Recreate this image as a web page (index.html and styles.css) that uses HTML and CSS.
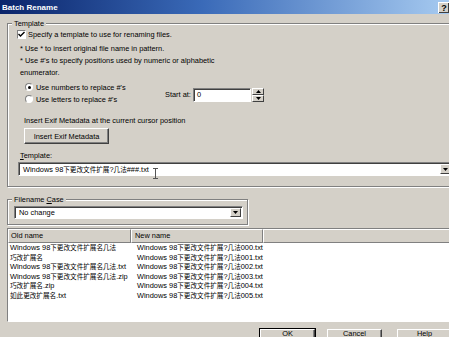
FILE: index.html
```html
<!DOCTYPE html>
<html lang="en">
<head>
  <meta charset="UTF-8" />
  <title>Batch Rename</title>
  <link rel="stylesheet" href="styles.css">
</head>
<body>
  <div class="window">
    <div class="titlebar">
      <span class="title">Batch Rename</span>
      <span class="help-btn">?</span>
    </div>

    <div class="dialog">
      <div class="group group-template">
        <span class="group-label">Template</span>

        <label class="check-row">
          <span class="checkbox">
            <svg width="7" height="7" viewBox="0 0 7 7"><path d="M0.5 3 L2.5 5 L6.5 1" fill="none" stroke="#000" stroke-width="1.4"/></svg>
          </span>
          Specify a template to use for renaming files.
        </label>

        <p class="notes">* Use * to insert original file name in pattern.<br>* Use #'s to specify positions used by numeric or alphabetic<br>enumerator.</p>

        <div class="numbering">
          <div class="radios">
            <label class="radio-row"><span class="radio on"></span>Use numbers to replace #'s</label>
            <label class="radio-row"><span class="radio"></span>Use letters to replace #'s</label>
          </div>
          <span class="start-label">Start at:</span>
          <div class="spin-box">
            <span class="spin-field">0</span>
            <span class="spin-btns">
              <span class="spin-btn"><svg width="5" height="3" viewBox="0 0 5 3"><path d="M0 3 L2.5 0 L5 3 Z" fill="#000"/></svg></span>
              <span class="spin-btn"><svg width="5" height="3" viewBox="0 0 5 3"><path d="M0 0 L2.5 3 L5 0 Z" fill="#000"/></svg></span>
            </span>
          </div>
        </div>

        <div class="exif-hint">Insert Exif Metadata at the current cursor position</div>
        <button class="btn btn-exif">Insert Exif Metadata</button>

        <div class="field-label"><u>T</u>emplate:</div>
        <div class="combo combo-template">
          <span class="combo-text">Windows 98<span class="cjk">下更改文件扩展</span>?<span class="cjk">几法</span>###.txt</span>
          <svg class="ibeam" width="5" height="11" viewBox="0 0 5 11"><path d="M0 0.5 H5 M2.5 0.5 V10.5 M0 10.5 H5" stroke="#555" stroke-width="1" fill="none"/></svg>
          <span class="combo-btn"><svg width="5" height="3" viewBox="0 0 5 3"><path d="M0 0 L2.5 3 L5 0 Z" fill="#000"/></svg></span>
        </div>
      </div>

      <div class="group group-case">
        <span class="group-label">Filename <u>C</u>ase</span>
        <div class="combo combo-case">
          <span class="combo-text">No change</span>
          <span class="combo-btn"><svg width="5" height="3" viewBox="0 0 5 3"><path d="M0 0 L2.5 3 L5 0 Z" fill="#000"/></svg></span>
        </div>
      </div>

      <div class="list">
        <div class="list-head">
          <span class="col col-old">Old name</span>
          <span class="col col-new">New name</span>
          <span class="col col-rest"></span>
        </div>
        <div class="list-row"><span class="cell col-old">Windows 98<span class="cjk">下更改文件扩展名几法</span></span><span class="cell col-new">Windows 98<span class="cjk">下更改文件扩展</span>?<span class="cjk">几法</span>000.txt</span></div>
        <div class="list-row"><span class="cell col-old"><span class="cjk">巧改扩展名</span></span><span class="cell col-new">Windows 98<span class="cjk">下更改文件扩展</span>?<span class="cjk">几法</span>001.txt</span></div>
        <div class="list-row"><span class="cell col-old">Windows 98<span class="cjk">下更改文件扩展名几法</span>.txt</span><span class="cell col-new">Windows 98<span class="cjk">下更改文件扩展</span>?<span class="cjk">几法</span>002.txt</span></div>
        <div class="list-row"><span class="cell col-old">Windows 98<span class="cjk">下更改文件扩展名几法</span>.zip</span><span class="cell col-new">Windows 98<span class="cjk">下更改文件扩展</span>?<span class="cjk">几法</span>003.txt</span></div>
        <div class="list-row"><span class="cell col-old"><span class="cjk">巧改扩展名</span>.zip</span><span class="cell col-new">Windows 98<span class="cjk">下更改文件扩展</span>?<span class="cjk">几法</span>004.txt</span></div>
        <div class="list-row"><span class="cell col-old"><span class="cjk">如此更改扩展名</span>.txt</span><span class="cell col-new">Windows 98<span class="cjk">下更改文件扩展</span>?<span class="cjk">几法</span>005.txt</span></div>
      </div>

      <div class="buttons">
        <button class="btn btn-default">OK</button>
        <button class="btn btn-cancel">Cancel</button>
        <button class="btn btn-help">Help</button>
      </div>
    </div>
  </div>
</body>
</html>
```

FILE: styles.css
```css
body {
  margin: 0;
  background-color: #d4d0c8;
  font-family: 'Liberation Sans', 'Noto Sans CJK SC', sans-serif;
  font-size: 7.4px;
  color: #000;
  overflow: hidden;
}

.window {
  width: 449px;
  height: 337px;
  overflow: hidden;
}

.cjk {
  font-size: 6.6px;
}

.titlebar {
  height: 14px;
  display: flex;
  align-items: center;
  justify-content: space-between;
  background: linear-gradient(to right, #0a246a, #3a6ab8 45%, #a6caf0);
  padding-left: 2px;
}

.title {
  color: #fff;
  font-weight: bold;
  font-size: 8px;
}

.help-btn {
  width: 11px;
  height: 11px;
  background-color: #d4d0c8;
  border-left: 1px solid #fff;
  border-top: 1px solid #fff;
  box-shadow: inset -1px -1px 0 #404040;
  font-weight: bold;
  font-size: 9px;
  line-height: 11px;
  text-align: center;
  box-sizing: border-box;
}

.dialog {
  padding-left: 7px;
  width: 460px;
}

/* etched group boxes */
.group {
  position: relative;
  border: 1px solid #808080;
  box-shadow: inset 1px 1px 0 #fff, 1px 1px 0 #fff;
  box-sizing: border-box;
}

.group-label {
  position: absolute;
  top: -6px;
  left: 4px;
  padding: 0 2px;
  background-color: #d4d0c8;
  line-height: 11px;
}

.group-template {
  margin-top: 9px;
  width: 448px;
  height: 164px;
}

.check-row {
  display: flex;
  align-items: center;
  margin-top: 4px;
  padding-left: 9px;
  height: 12px;
}

.checkbox {
  width: 9px;
  height: 9px;
  box-sizing: border-box;
  background: #fff;
  border: 1px solid;
  border-color: #808080 #fff #fff #808080;
  margin-right: 2px;
  display: flex;
  align-items: center;
  justify-content: center;
}

.notes {
  margin: 3px 0 0;
  padding-left: 12px;
  line-height: 12px;
}

.numbering {
  display: flex;
  align-items: center;
  margin-top: 2px;
  padding-left: 17px;
}

.radios {
  width: 140px;
}

.radio-row {
  display: flex;
  align-items: center;
  height: 12px;
}

.radio {
  width: 8px;
  height: 8px;
  border-radius: 50%;
  box-sizing: border-box;
  background: #fff;
  border: 1px solid #808080;
  border-right-color: #fff;
  border-bottom-color: #fff;
  margin-right: 3px;
  position: relative;
}

.radio.on::after {
  content: "";
  position: absolute;
  left: 1.5px;
  top: 1.5px;
  width: 3px;
  height: 3px;
  border-radius: 50%;
  background: #000;
}

.start-label {
  width: 28px;
  margin-top: 2px;
}

.spin-box {
  display: flex;
  margin-top: 3px;
}

.spin-field {
  width: 58px;
  height: 14px;
  box-sizing: border-box;
  background: #fff;
  border: 1px solid;
  border-color: #808080 #fff #fff #808080;
  box-shadow: inset 1px 1px 0 #404040;
  padding-left: 3px;
  line-height: 12px;
}

.spin-btns {
  display: flex;
  flex-direction: column;
  margin-left: 1px;
}

.spin-btn {
  width: 12px;
  height: 7px;
  box-sizing: border-box;
  border: 1px solid;
  border-color: #fff #404040 #404040 #fff;
  display: flex;
  align-items: center;
  justify-content: center;
}

.exif-hint {
  margin-top: 10px;
  padding-left: 16px;
  line-height: 12px;
}

.btn {
  font-family: inherit;
  font-size: 7.4px;
  color: #000;
  background-color: #d4d0c8;
  border: 1px solid;
  border-color: #fff #404040 #404040 #fff;
  box-shadow: inset -1px -1px 0 #808080;
  padding: 0;
  box-sizing: border-box;
}

.btn-exif {
  display: block;
  margin: 1px 0 0 16px;
  width: 85px;
  height: 16px;
}

.field-label {
  margin-top: 6px;
  padding-left: 12px;
  line-height: 12px;
}

.combo {
  position: relative;
  display: flex;
  align-items: center;
  background: #fff;
  border: 1px solid;
  border-color: #808080 #fff #fff #808080;
  box-shadow: inset 1px 1px 0 #404040;
  box-sizing: border-box;
}

.combo-text {
  flex: 1;
  padding-left: 3px;
  white-space: nowrap;
}

.combo-btn {
  width: 11px;
  height: 100%;
  box-sizing: border-box;
  background-color: #d4d0c8;
  border: 1px solid;
  border-color: #fff #404040 #404040 #fff;
  display: flex;
  align-items: center;
  justify-content: center;
}

.combo-template {
  margin-left: 10px;
  width: 434px;
  height: 14px;
  padding: 1px 0 1px 1px;
}

.ibeam {
  position: absolute;
  left: 134px;
  top: 5px;
}

.group-case {
  margin-top: 12px;
  width: 241px;
  height: 26px;
}

.combo-case {
  margin: 6px 0 0 6px;
  width: 229px;
  height: 13px;
  padding: 1px;
}

.list {
  margin-top: 3px;
  width: 450px;
  height: 94px;
  box-sizing: border-box;
  background: #fff;
  border: 1px solid;
  border-color: #808080 #fff #fff #808080;
}

.list-head {
  display: flex;
  height: 14px;
}

.col {
  height: 14px;
  box-sizing: border-box;
  background-color: #d4d0c8;
  border: 1px solid;
  border-color: #fff #808080 #808080 #fff;
  line-height: 12px;
}

.col-old {
  width: 123px;
  padding-left: 2px;
}

.col-new {
  width: 132px;
  padding-left: 3px;
}

.col-rest {
  flex: 1;
}

.list-row {
  display: flex;
  height: 9.5px;
  line-height: 9.5px;
  white-space: nowrap;
}

.cell.col-old {
  padding-left: 2px;
}

.cell.col-new {
  padding-left: 4px;
}

.buttons {
  display: flex;
  margin-top: 7px;
  padding-left: 253px;
}

.buttons .btn {
  width: 55px;
  height: 14px;
  flex-shrink: 0;
  display: flex;
  align-items: flex-start;
  justify-content: center;
  padding-top: 0;
  line-height: 7px;
}

.btn-default {
  outline: 1px solid #000;
}

.btn-cancel {
  margin-left: 12px;
}

.btn-help {
  margin-left: 15px;
}
```
